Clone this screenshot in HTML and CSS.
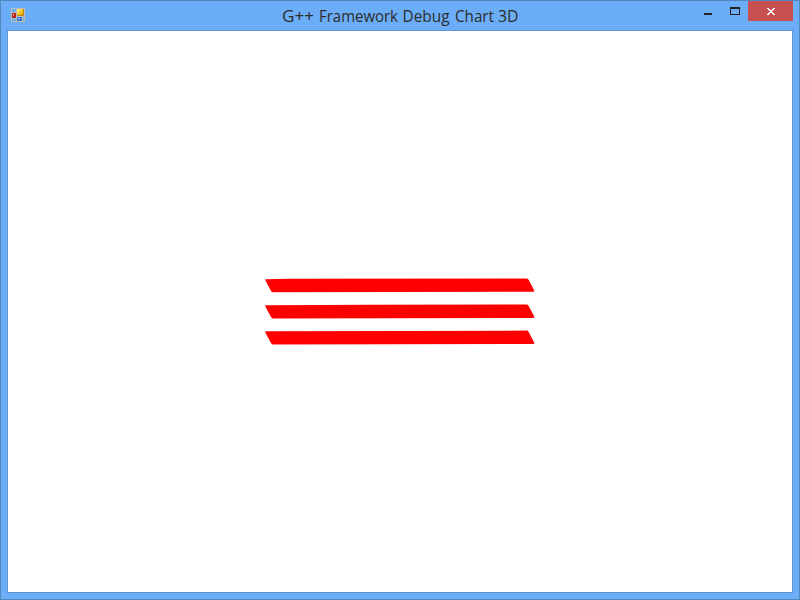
FILE: index.html
```html
<!DOCTYPE html>
<html lang="en">
<head>
<meta charset="utf-8">
<title>G++ Framework Debug Chart 3D</title>
<link rel="stylesheet" href="styles.css">
</head>
<body>
<div class="window">
  <header class="titlebar">
    <svg class="app-icon" viewBox="0 0 14 14" shape-rendering="crispEdges">
      <defs><linearGradient id="gold" x2="1" y2="1"><stop offset="0" stop-color="#fff0a0"/><stop offset=".5" stop-color="#f8c830"/><stop offset="1" stop-color="#d89a10"/></linearGradient></defs>
      <path d="M.5 .5H5.5V4.5H.5ZM5.5 .5H13.5V8.5H5.5ZM.5 4.5H5.5V10.5H.5ZM.5 10.5H5.5V13.5H.5ZM5.5 8.5H11.5V13.5H5.5ZM11.5 8.5H13.5V13.5H11.5Z" fill="none" stroke="#bdbdb8"/>
      <path d="M6 1H13V8H6Z" fill="#b98716"/>
      <path d="M6 1H12V7H6Z" fill="url(#gold)"/>
      <path d="M1 5H5V10H1Z" fill="#b5231d"/><path d="M2 6H3V8H2Z" fill="#f59a8b"/>
      <path d="M6 9H11V13H6Z" fill="#3f73d0"/><path d="M7 10H9V11H7Z" fill="#a0c5f5"/>
    </svg>
    <h1 class="title"><svg class="title-text" width="240" height="28"><text y="20.6"><tspan x="2" textLength="32" lengthAdjust="spacingAndGlyphs">G++</tspan> <tspan x="39" textLength="79" lengthAdjust="spacingAndGlyphs">Framework</tspan> <tspan x="122.5" textLength="47" lengthAdjust="spacingAndGlyphs">Debug</tspan> <tspan x="175" textLength="39" lengthAdjust="spacingAndGlyphs">Chart</tspan> <tspan x="218" textLength="20.5" lengthAdjust="spacingAndGlyphs">3D</tspan></text></svg></h1>
    <div class="controls">
      <button class="control minimize" aria-label="Minimize"><svg width="8" height="2"><path d="M0 0H8V2H0Z"/></svg></button>
      <button class="control maximize" aria-label="Maximize"><svg width="10" height="8" shape-rendering="crispEdges"><path fill-rule="evenodd" d="M0 0H10V8H0ZM1 2V7H9V2Z"/></svg></button>
      <button class="control close" aria-label="Close"><svg width="8" height="7" shape-rendering="crispEdges"><path d="M0 0H2V1H3V2H5V1H6V0H8V1H7V2H6V3H5V4H6V5H7V6H8V7H6V6H5V5H3V6H2V7H0V6H1V5H2V4H3V3H2V2H1V1H0Z"/></svg></button>
    </div>
  </header>
  <main class="client">
    <svg class="chart" width="270" height="68" viewBox="265 278 270 68">
      <path d="M265.3 279.2L290 278.8L527 278.4Q528 278.4 528.7 280L534.3 290.5Q534.5 291.8 533 291.8L273 292.2Q271.7 292.2 271 291L265.5 280.5Z"/>
      <path d="M265.3 305.3L370 304.8L527 304.5Q528 304.5 528.7 306L534.3 316.5Q534.5 318 533 318L273 318.4Q271.7 318.4 271 317L265.5 306.7Z"/>
      <path d="M265.3 331.3L405 330.9L527 330.6Q528 330.6 528.7 332L534.3 342.7Q534.5 344 533 344L273 344.5Q271.7 344.5 271 343L265.5 333Z"/>
    </svg>
  </main>
</div>
</body>
</html>
```
FILE: styles.css
```css
* { box-sizing: border-box; }
body { margin: 0; overflow: hidden; }
.window {
  width: 800px; height: 600px;
  padding: 0 6px 6px;
  display: flex; flex-direction: column;
  background: #6badf6;
  border: 1px solid #5387c0;
}
.titlebar {
  height: 29px; flex: none;
  display: grid; grid-template-columns: 90px 1fr 99px;
  align-items: start;
  padding-left: 4px;
}
.app-icon { width: 14px; height: 14px; margin-top: 7px; }
.title { margin: 0 0 0 179px; height: 28px; font: 400 15.5px "Open Sans", "Noto Sans", sans-serif; }
.title-text { display: block; fill: #2b2b2b; }
.controls { display: flex; height: 20px; }
.control { padding: 0; border: 0; background: none; display: flex; fill: #222; }
.minimize { width: 26px; padding: 12px 0 0 10px; }
.maximize { width: 28px; padding: 6px 0 0 10px; }
.close { width: 45px; height: 20px; padding: 7px 0 0 19px; background: #c75050; fill: #fff; }
.client {
  flex: 1;
  display: flex; justify-content: center;
  padding-top: 247px;
  background: #fff;
  border: 1px solid #5b96d5;
}
.chart { fill: #f00; }
```
